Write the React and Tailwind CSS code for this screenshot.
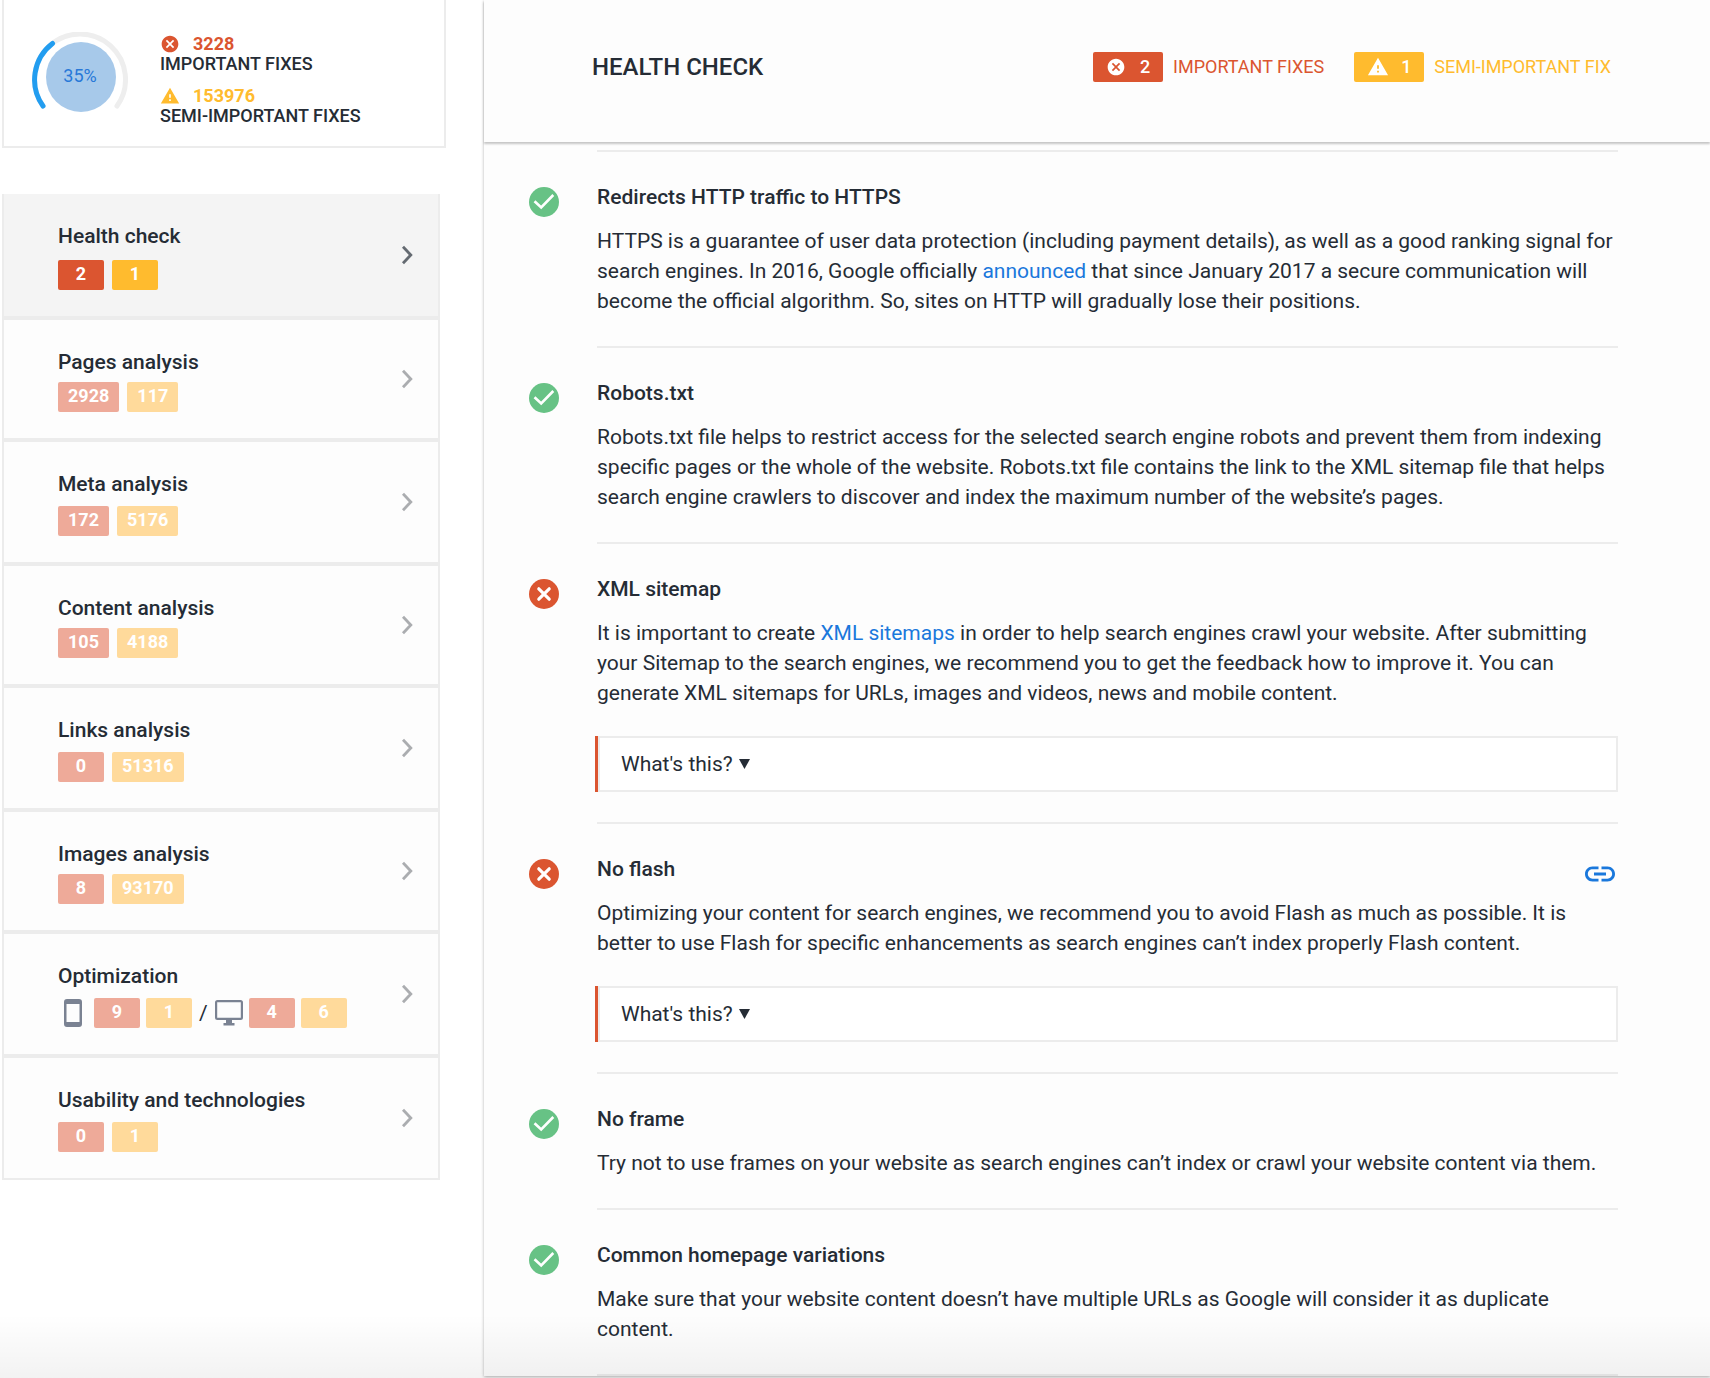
import { MdCancel, MdWarning, MdLink } from "react-icons/md";

const navItems = [
  { id: "health", title: "Health check", important: 2, semi: 1, active: true },
  { id: "pages", title: "Pages analysis", important: 2928, semi: 117 },
  { id: "meta", title: "Meta analysis", important: 172, semi: 5176 },
  { id: "content", title: "Content analysis", important: 105, semi: 4188 },
  { id: "links", title: "Links analysis", important: 0, semi: 51316 },
  { id: "images", title: "Images analysis", important: 8, semi: 93170 },
  {
    id: "optimization",
    title: "Optimization",
    mobile: { important: 9, semi: 1 },
    desktop: { important: 4, semi: 6 },
  },
  { id: "usability", title: "Usability and technologies", important: 0, semi: 1 },
];

const checks = [
  {
    id: "https",
    title: "Redirects HTTP traffic to HTTPS",
    passed: true,
    text: (
      <>
        HTTPS is a guarantee of user data protection (including payment
        details), as well as a good ranking signal for search engines. In 2016,
        Google officially <TextLink>announced</TextLink> that since January 2017
        a secure communication will become the official algorithm. So, sites on
        HTTP will gradually lose their positions.
      </>
    ),
  },
  {
    id: "robots",
    title: "Robots.txt",
    passed: true,
    text: "Robots.txt file helps to restrict access for the selected search engine robots and prevent them from indexing specific pages or the whole of the website. Robots.txt file contains the link to the XML sitemap file that helps search engine crawlers to discover and index the maximum number of the website’s pages.",
  },
  {
    id: "sitemap",
    title: "XML sitemap",
    passed: false,
    text: (
      <>
        It is important to create <TextLink>XML sitemaps</TextLink> in order to
        help search engines crawl your website. After submitting your Sitemap to
        the search engines, we recommend you to get the feedback how to improve
        it. You can generate XML sitemaps for URLs, images and videos, news and
        mobile content.
      </>
    ),
  },
  {
    id: "flash",
    title: "No flash",
    passed: false,
    hasLink: true,
    text: "Optimizing your content for search engines, we recommend you to avoid Flash as much as possible. It is better to use Flash for specific enhancements as search engines can’t index properly Flash content.",
  },
  {
    id: "frame",
    title: "No frame",
    passed: true,
    text: "Try not to use frames on your website as search engines can’t index or crawl your website content via them.",
  },
  {
    id: "homepage",
    title: "Common homepage variations",
    passed: true,
    text: "Make sure that your website content doesn’t have multiple URLs as Google will consider it as duplicate content.",
  },
];

function TextLink({ children }) {
  return (
    <a href="#" className="text-[#1a78dc] hover:underline">
      {children}
    </a>
  );
}

const badgeColors = {
  important: "bg-[#db5530]",
  semi: "bg-[#ffbb2e]",
  importantMuted: "bg-[#eeaa99]",
  semiMuted: "bg-[#ffda9b]",
};

function Badge({ color, children }) {
  return (
    <span
      className={`flex h-[30px] min-w-[46px] items-center justify-center rounded-xs px-2.5 pb-0.5 text-lg leading-none font-bold text-white ${badgeColors[color]}`}
    >
      {children}
    </span>
  );
}

function BadgePair({ item, active }) {
  return (
    <>
      <Badge color={active ? "important" : "importantMuted"}>
        {item.important}
      </Badge>
      <Badge color={active ? "semi" : "semiMuted"}>{item.semi}</Badge>
    </>
  );
}

function StatusIcon({ passed }) {
  return (
    <svg
      className="mt-[35px] size-[30px] shrink-0"
      viewBox="0 0 30 30"
      fill="none"
      role="img"
      aria-label={passed ? "Passed" : "Failed"}
    >
      <circle cx="15" cy="15" r="15" fill={passed ? "#67c285" : "#db5530"} />
      <path
        d={passed ? "M5.5 14.2l6.7 6.3L24.3 8" : "M9.8 9.8l10.400 10.400M20.200 9.800l-10.400 10.400"}
        stroke="#fff"
        strokeWidth={passed ? "2.6" : "3.2"}
        strokeLinecap={passed ? "butt" : "round"}
      />
    </svg>
  );
}

function PhoneIcon() {
  return (
    <svg className="h-7 w-[18px]" viewBox="0 0 18 28">
      <path
        fill="#7a8292"
        fillRule="evenodd"
        d="M3 0h12a3 3 0 0 1 3 3v22a3 3 0 0 1-3 3H3a3 3 0 0 1-3-3V3a3 3 0 0 1 3-3zM2.5 5v18h13V5z"
      />
    </svg>
  );
}

function MonitorIcon() {
  return (
    <svg className="h-[26px] w-7" viewBox="0 0 28 26">
      <path
        fill="#7a8292"
        fillRule="evenodd"
        d="M2.5 0h23A2.5 2.5 0 0 1 28 2.5v15a2.5 2.5 0 0 1-2.5 2.5H17v3h2.500v2.500h-11v-2.500H11v-3H2.500A2.500 2.500 0 0 1 0 17.500v-15A2.500 2.500 0 0 1 2.500 0zM2.200 2.200v15.600h23.600v-15.600z"
      />
    </svg>
  );
}

function Gauge() {
  return (
    <svg className="size-24 shrink-0" viewBox="0 0 96 96" fill="none">
      <path
        d="M11 74A45.500 45.500 0 1 1 85 74"
        stroke="#eee"
        strokeWidth="5"
        strokeLinecap="round"
      />
      <path
        d="M11 74A45.500 45.500 0 0 1 20.500 11.500"
        stroke="#229df0"
        strokeWidth="5"
        strokeLinecap="round"
      />
      <circle cx="49" cy="45" r="35" fill="#a7c9ea" />
      <text x="48" y="50" textAnchor="middle" fontSize="18" fill="#2878d8">
        35%
      </text>
    </svg>
  );
}

function Summary() {
  return (
    <section className="flex h-[148px] w-[444px] gap-8 border-2 border-t-0 border-[#ececec] bg-white pt-8 pl-7">
      <Gauge />
      <div className="flex flex-col pt-0.5 text-lg leading-5 font-medium">
        <div className="flex items-center gap-[13px] font-bold text-[#db5530]">
          <MdCancel className="size-5" />
          3228
        </div>
        <div>IMPORTANT FIXES</div>
        <div className="mt-3 flex items-center gap-[13px] font-bold text-[#ffbb2e]">
          <MdWarning className="size-5" />
          153976
        </div>
        <div>SEMI-IMPORTANT FIXES</div>
      </div>
    </section>
  );
}

function NavRow({ item }) {
  return (
    <button
      className={`flex w-full items-center justify-between border-b-4 border-[#ececec] pr-[25px] pl-[54px] text-left last:border-b-2 ${
        item.active
          ? "h-[126px] bg-[#f4f4f4]"
          : "bg-[#fdfdfd] odd:h-[124px] even:h-[122px]"
      }`}
    >
      <div className="flex h-full flex-col justify-between pt-7 pb-[26px]">
        <div className="text-[21px] leading-7 font-medium">{item.title}</div>
        {item.mobile ? (
          <div className="flex items-center gap-1.5">
            <span className="mr-1.5 ml-1.5">
              <PhoneIcon />
            </span>
            <BadgePair item={item.mobile} />
            <span className="px-px text-[21px] leading-none">/</span>
            <MonitorIcon />
            <BadgePair item={item.desktop} />
          </div>
        ) : (
          <div className="flex gap-2">
            <BadgePair item={item} active={item.active} />
          </div>
        )}
      </div>
      <svg
        className={`h-5 w-3 ${item.active ? "text-[#646a71]" : "text-[#abadb0]"}`}
        viewBox="0 0 12 20"
        fill="none"
      >
        <path d="M2 1.800l7.800 8.200-7.800 8.200" stroke="currentColor" strokeWidth="2.800" />
      </svg>
    </button>
  );
}

function CheckItem({ check }) {
  return (
    <li className="flex gap-[38px]">
      <StatusIcon passed={check.passed} />
      <div className="flex-1 border-b-2 border-[#ececec] py-[30px] text-[21px] leading-[30px]">
        <div className="flex h-[30px] justify-between">
          <h2 className="font-medium">{check.title}</h2>
          {check.hasLink && (
            <a href="#" aria-label="Open link" className="mt-0.5 text-[#1a78dc]">
              <MdLink className="size-9" />
            </a>
          )}
        </div>
        <p className="mt-3.5">{check.text}</p>
        {!check.passed && (
          <div className="mt-7 -ml-0.5 border-l-[3px] border-[#db5530]">
            <button className="flex h-14 w-full items-center gap-1.5 border-2 border-[#ececec] bg-white px-[21px]">
              What's this?
              <svg className="h-2.5 w-[11px]" viewBox="0 0 11 10">
                <path d="M0 0h11L5.500 10z" fill="currentColor" />
              </svg>
            </button>
          </div>
        )}
      </div>
    </li>
  );
}

export default function App() {
  return (
    <div className="relative flex min-h-screen bg-white font-[Roboto,sans-serif] text-[#252c35]">
      <aside className="w-[484px] shrink-0 pl-0.5">
        <Summary />
        <nav className="mt-[46px] w-[438px] border-x-2 border-[#ececec]">
          {navItems.map((item) => (
            <NavRow key={item.id} item={item} />
          ))}
        </nav>
      </aside>

      <main className="mb-0.5 flex-1 bg-[#fdfdfd] shadow-[0_1px_3px_rgba(0,0,0,0.3)]">
        <header className="flex h-[142px] items-center justify-between pr-[99px] pb-2 pl-[108px] shadow-[0_2px_2px_rgba(0,0,0,0.22)]">
          <h1 className="text-2xl font-medium">HEALTH CHECK</h1>
          <div className="flex items-center gap-[30px] text-lg">
            <div className="flex items-center gap-2.5 text-[#db5530]">
              <span className="flex h-[30px] w-[70px] items-center justify-center gap-3.5 rounded-xs bg-[#db5530] font-medium text-white">
                <MdCancel className="size-5" />2
              </span>
              IMPORTANT FIXES
            </div>
            <div className="flex items-center gap-2.5 text-[#ffbb2e]">
              <span className="flex h-[30px] w-[70px] items-center justify-center gap-3 rounded-xs bg-[#ffbb2e] font-medium text-white">
                <MdWarning className="size-[22px]" />1
              </span>
              SEMI-IMPORTANT FIX
            </div>
          </div>
        </header>

        <ul className="pr-[92px] pl-[45px]">
          <li className="mt-2 ml-[68px] h-0.5 bg-[#ececec]" />
          {checks.map((check) => (
            <CheckItem key={check.id} check={check} />
          ))}
        </ul>
      </main>

      {/* Fade at the bottom edge of the page */}
      <div className="pointer-events-none absolute inset-x-0 bottom-0 h-16 bg-linear-to-t from-black/5 to-transparent" />
    </div>
  );
}
